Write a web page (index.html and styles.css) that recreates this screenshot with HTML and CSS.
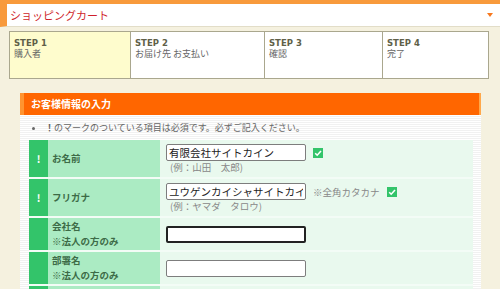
FILE: index.html
```html
<!DOCTYPE html>
<html lang="ja">
<head>
    <meta charset="UTF-8">
    <meta name="viewport" content="width=device-width, initial-scale=1.0">
    <title>ショッピングカート</title>
    <link rel="stylesheet" href="styles.css">
</head>
<body>
    <header class="cart-head">
        <h1>ショッピングカート</h1>
        <span class="arrow"></span>
    </header>

    <div class="wrap">
        <ol class="steps">
            <li class="current"><b>STEP 1</b><span>購入者</span></li>
            <li><b>STEP 2</b><span>お届け先 お支払い</span></li>
            <li><b>STEP 3</b><span>確認</span></li>
            <li><b>STEP 4</b><span>完了</span></li>
        </ol>

        <section class="panel">
            <h2>お客様情報の入力</h2>
            <div class="panel-body">
                <ul class="notes">
                    <li><strong>！</strong>のマークのついている項目は必須です。必ずご記入ください。</li>
                </ul>

                <table class="form">
                    <tr class="row-tall">
                        <td class="req">!</td>
                        <th>お名前</th>
                        <td class="val">
                            <div class="line">
                                <input type="text" value="有限会社サイトカイン">
                                <svg class="ok" viewBox="0 0 10 10"><rect width="10" height="10" fill="#33c46a"/><path d="M2.2 5.2 L4.2 7.2 L8 3" fill="none" stroke="#fff" stroke-width="1.6"/></svg>
                            </div>
                            <div class="hint">(例：山田　太郎)</div>
                        </td>
                    </tr>
                    <tr class="row-tall">
                        <td class="req">!</td>
                        <th>フリガナ</th>
                        <td class="val">
                            <div class="line">
                                <input type="text" value="ユウゲンカイシャサイトカイン">
                                <span class="note">※全角カタカナ</span>
                                <svg class="ok" viewBox="0 0 10 10"><rect width="10" height="10" fill="#33c46a"/><path d="M2.2 5.2 L4.2 7.2 L8 3" fill="none" stroke="#fff" stroke-width="1.6"/></svg>
                            </div>
                            <div class="hint">(例：ヤマダ　タロウ)</div>
                        </td>
                    </tr>
                    <tr>
                        <td class="req"></td>
                        <th>会社名<br>※法人の方のみ</th>
                        <td class="val"><input type="text" class="focus"></td>
                    </tr>
                    <tr>
                        <td class="req"></td>
                        <th>部署名<br>※法人の方のみ</th>
                        <td class="val"><input type="text"></td>
                    </tr>
                    <tr>
                        <td class="req"></td>
                        <th>&nbsp;</th>
                        <td class="val">&nbsp;</td>
                    </tr>
                </table>
            </div>
        </section>
    </div>
</body>
</html>
```

FILE: styles.css
```css
body {
    margin: 0;
    background-color: #f5f1df;
    font-family: "Noto Sans CJK JP", "DejaVu Sans", sans-serif;
    color: #555;
    overflow: hidden;
}
.cart-head {
    display: flex;
    align-items: center;
    justify-content: space-between;
    height: 22px;
    border-top: 4px solid #f89a3c;
    border-left: 7px solid #f89a3c;
    border-bottom: 1px solid #e2ddc8;
    background-color: #fff;
    padding: 0 7px 0 3px;
}
.cart-head h1 {
    margin: 0;
    font-size: 11px;
    font-weight: normal;
    color: #cf1f2c;
}
.arrow {
    width: 0;
    height: 0;
    border-left: 3px solid transparent;
    border-right: 3px solid transparent;
    border-top: 4px solid #f7781e;
}
.wrap {
    padding: 4px 11px 0 9px;
}
.steps {
    display: grid;
    grid-template-columns: 120px 134px 118px 1fr;
    list-style: none;
    margin: 0;
    padding: 0;
    height: 46px;
    border: 1px solid #aaa78e;
    background-color: #fff;
}
.steps li {
    padding: 6px 4px;
    border-left: 1px solid #aaa78e;
}
.steps li:first-child {
    border-left: none;
}
.steps li.current {
    background-color: #fefccd;
}
.steps b {
    display: block;
    font-family: "DejaVu Sans", sans-serif;
    font-size: 8.5px;
    line-height: 10px;
    color: #5f5f48;
}
.steps span {
    display: block;
    font-size: 9px;
    line-height: 12px;
    color: #666;
}
.panel {
    margin: 14px 0 0 11px;
    width: 461px;
}
.panel h2 {
    margin: 0;
    height: 22px;
    line-height: 22px;
    background-color: #ff6600;
    border-left: 4px solid #ff9430;
    border-right: 2px solid #ffa84a;
    padding-left: 7px;
    font-size: 10px;
    color: #fff;
}
.panel-body {
    background: repeating-linear-gradient(to bottom, #ffffff 0, #ffffff 1px, #f1f1f1 1px, #f1f1f1 2px);
    padding: 0 8px 0 9px;
}
.notes {
    margin: 0;
    padding: 7px 0 6px 16px;
    font-size: 9px;
    line-height: 12px;
    color: #666;
}
.form {
    width: 100%;
    border-collapse: collapse;
}
.form td,
.form th {
    padding: 0;
    border-bottom: 2px solid #f3fcf6;
    height: 32px;
}
.form .row-tall td,
.form .row-tall th {
    height: 37px;
}
.req {
    width: 19px;
    background-color: #33c46a;
    color: #fff;
    font-weight: bold;
    font-size: 10px;
    text-align: center;
}
.form th {
    width: 108px;
    padding-left: 4px;
    background-color: #abebc3;
    text-align: left;
    font-size: 9.5px;
    line-height: 15px;
    color: #3d6b47;
}
.val {
    background-color: #e9f9ee;
    padding-left: 6px !important;
    font-size: 9.5px;
}
.line {
    display: flex;
    align-items: center;
    gap: 7px;
}
input {
    box-sizing: border-box;
    width: 140px;
    height: 17px;
    margin: 0;
    padding: 0 2px;
    border: 1px solid #7d7d7d;
    border-radius: 2px;
    background-color: #fff;
    font-family: "Noto Sans CJK JP", sans-serif;
    font-size: 10.5px;
    color: #222;
}
input.focus {
    border: 2px solid #222;
}
.ok {
    width: 10px;
    height: 10px;
}
.note {
    color: #888;
    font-size: 9.5px;
}
.hint {
    padding-left: 4px;
    color: #888;
    line-height: 12px;
}
```
